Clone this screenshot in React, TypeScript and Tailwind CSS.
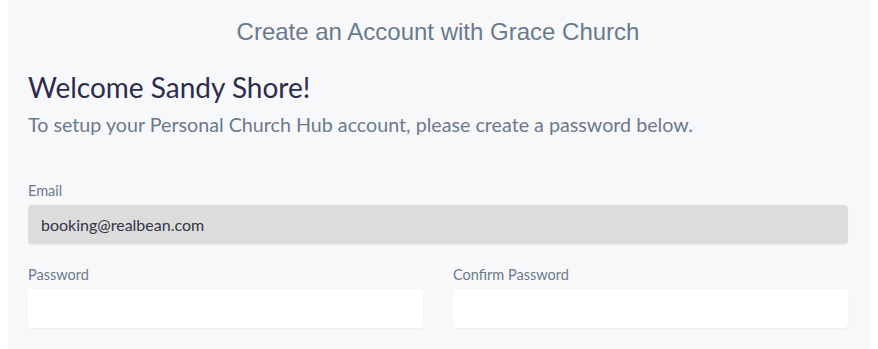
import React from 'react';

export default function App() {
  return (
    <div className="min-h-screen bg-white px-2">
      <div className="min-h-[349px] bg-[#f7f8fa] pl-5 pr-[22px]" style={{ fontFamily: 'Lato, "Noto Sans", sans-serif' }}>
        <h2
          className="pt-[17px] text-center text-[24px] leading-[30px] text-[#6b7a8b]"
          style={{ fontFamily: '"Liberation Sans", Arial, sans-serif' }}
        >
          Create an Account with Grace Church
        </h2>

        <h1 className="mt-[23px] text-[28px] leading-[34px] text-[#2d2c4e]">Welcome Sandy Shore!</h1>
        <p className="mt-[9px] text-[19.7px] leading-[24px] text-[#6b7a8b]">
          To setup your Personal Church Hub account, please create a password below.
        </p>

        <div className="mt-[45px]">
          <label className="block text-[14.5px] leading-[18px] text-[#6b7a8b]">Email</label>
          <div className="mt-[5px] flex h-[39px] items-center rounded bg-[#dcdcdc] px-[13px] text-[16px] text-[#33334a] shadow-[0_1px_2px_rgba(0,0,0,0.06)]">
            booking@realbean.com
          </div>
        </div>

        <div className="mt-[22px] grid grid-cols-2 gap-[30px]">
          <div>
            <label className="block text-[14.5px] leading-[18px] text-[#6b7a8b]">Password</label>
            <input
              type="password"
              className="mt-[5px] block h-[39px] w-full rounded bg-white px-[13px] text-[16px] outline-none shadow-[0_1px_2px_rgba(0,0,0,0.05)]"
            />
          </div>
          <div>
            <label className="block text-[14.5px] leading-[18px] text-[#6b7a8b]">Confirm Password</label>
            <input
              type="password"
              className="mt-[5px] block h-[39px] w-full rounded bg-white px-[13px] text-[16px] outline-none shadow-[0_1px_2px_rgba(0,0,0,0.05)]"
            />
          </div>
        </div>
      </div>
    </div>
  );
}
